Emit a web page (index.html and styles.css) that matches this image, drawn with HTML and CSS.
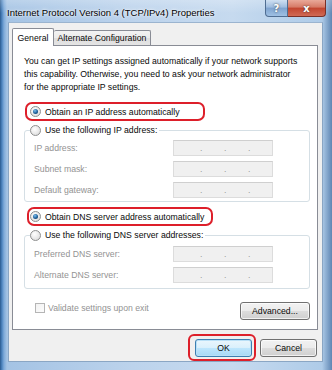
FILE: index.html
```html
<!DOCTYPE html>
<html>
<head>
<meta charset="utf-8">
<link rel="stylesheet" href="styles.css">
</head>
<body>
<div class="window">
  <div class="titlebar">
    <span class="title">Internet Protocol Version 4 (TCP/IPv4) Properties</span>
    <div class="caption-btns">
      <span class="cap help">?</span>
      <span class="cap close">x</span>
    </div>
  </div>
  <div class="client">
    <div class="tabs">
      <div class="tab active">General</div>
      <div class="tab">Alternate Configuration</div>
    </div>
    <div class="panel">
      <p class="intro">You can get IP settings assigned automatically if your network supports<br>this capability. Otherwise, you need to ask your network administrator<br>for the appropriate IP settings.</p>

      <div class="mark mark-ip">
        <span class="radio on"></span><span class="opt">Obtain an IP address automatically</span>
      </div>

      <fieldset class="group group-ip">
        <legend><span class="radio"></span><span class="opt">Use the following IP address:</span></legend>
        <div class="row"><span class="lbl">IP address:</span><span class="ip"><i>.</i><i>.</i><i>.</i></span></div>
        <div class="row"><span class="lbl">Subnet mask:</span><span class="ip"><i>.</i><i>.</i><i>.</i></span></div>
        <div class="row"><span class="lbl">Default gateway:</span><span class="ip"><i>.</i><i>.</i><i>.</i></span></div>
      </fieldset>

      <div class="mark mark-dns">
        <span class="radio on"></span><span class="opt">Obtain DNS server address automatically</span>
      </div>

      <fieldset class="group group-dns">
        <legend><span class="radio"></span><span class="opt">Use the following DNS server addresses:</span></legend>
        <div class="row"><span class="lbl">Preferred DNS server:</span><span class="ip"><i>.</i><i>.</i><i>.</i></span></div>
        <div class="row"><span class="lbl">Alternate DNS server:</span><span class="ip"><i>.</i><i>.</i><i>.</i></span></div>
      </fieldset>

      <div class="bottom-row">
        <label class="check"><span class="box"></span><span>Validate settings upon exit</span></label>
        <button class="btn adv">Advanced...</button>
      </div>
    </div>
    <div class="footer">
      <div class="mark-ok"><button class="btn default">OK</button></div>
      <button class="btn cancel">Cancel</button>
    </div>
  </div>
</div>
</body>
</html>
```

FILE: styles.css
```css
* { box-sizing: border-box; }
html, body { margin: 0; padding: 0; }
body {
  width: 332px;
  height: 370px;
  overflow: hidden;
  font-family: "Liberation Sans", Arial, sans-serif;
  font-size: 8.7px;
  color: #0a0a0a;
  background: #9fbfe0;
}
.window {
  width: 332px;
  height: 370px;
  display: flex;
  flex-direction: column;
  background:
    linear-gradient(to right, #2a5a8f 0, #4f86c0 2px, #7eaad9 4px, #a4c3e4 7px, #bcd3ec 40%, #c6daef 70%, #aecbe8 97%, #5f86b3 100%);
}
.titlebar {
  height: 23px;
  display: flex;
  justify-content: space-between;
  align-items: flex-start;
  background: linear-gradient(to bottom, rgba(255,255,255,0.25), rgba(255,255,255,0) 60%);
}
.title {
  font-size: 9.5px;
  padding: 7px 0 0 7px;
  color: #000;
  text-shadow: 0 0 4px rgba(255,255,255,0.9), 0 0 2px #fff;
}
.caption-btns {
  display: flex;
  margin-right: 6px;
}
.cap {
  height: 17px;
  display: flex;
  align-items: center;
  justify-content: center;
  color: #fff;
  font-family: "DejaVu Sans", sans-serif;
  font-weight: bold;
  font-size: 10px;
  text-shadow: 0 0 2px #333;
  border: 1px solid #4f6d92;
  border-top: none;
}
.help {
  width: 23px;
  border-radius: 0 0 0 4px;
  background: linear-gradient(to bottom, #cfe0f2, #9fbde0 45%, #7ea3cf 50%, #9fc0e3);
}
.close {
  width: 38px;
  border-left: none;
  border-color: #7a3027;
  border-radius: 0 0 4px 0;
  background: linear-gradient(to bottom, #e9a999, #d67a66 45%, #c2452f 50%, #d06a55);
}
.client {
  flex: 1;
  margin: 0 9px 8px 8px;
  background: #f0f0f0;
  border: 1px solid #8aa6c4;
  border-top-color: #9bb4cf;
  padding: 5px 4px 0 3px;
  display: flex;
  flex-direction: column;
}
.tabs {
  display: flex;
  align-items: flex-end;
  height: 17px;
}
.tab {
  position: relative;
  border: 1px solid #898c95;
  border-bottom: none;
  border-radius: 2px 2px 0 0;
  display: flex;
  align-items: center;
  justify-content: center;
}
.tab.active {
  z-index: 1;
  height: 18px;
  width: 42px;
  margin-bottom: -1px;
  background: #fff;
}
.tab:not(.active) {
  height: 15px;
  width: 97px;
  border-left: none;
  background: linear-gradient(to bottom, #f3f3f3, #ebebeb 50%, #dedede 50%, #e4e4e4);
}
.panel {
  height: 285px;
  background: #fff;
  border: 1px solid #898c95;
  padding: 9px 7px 0 11px;
  display: flex;
  flex-direction: column;
}
.intro {
  margin: 0;
  line-height: 13px;
}
.mark {
  display: flex;
  align-items: center;
  height: 19px;
  border: 2px solid #dd1f2a;
  border-radius: 7px;
  padding-left: 3px;
}
.mark-ip { width: 180px; margin: 8px 0 0 1px; }
.mark-dns { width: 186px; margin: 5px 0 0 3px; padding-left: 1px; }
.radio {
  width: 11px;
  height: 11px;
  flex: none;
  border-radius: 50%;
  border: 1px solid #8e8f8f;
  background: radial-gradient(circle at 40% 35%, #ffffff, #dedede 80%);
  display: inline-flex;
  align-items: center;
  justify-content: center;
  margin-right: 4px;
}
.radio.on::after {
  content: "";
  width: 5px;
  height: 5px;
  border-radius: 50%;
  background: radial-gradient(circle at 40% 35%, #7fc0ee, #1d5f9a 55%, #0c2e52);
}
.opt { white-space: nowrap; }
.group {
  margin: 3px 0 0 0;
  border: 1px solid #d5dfe5;
  border-radius: 3px;
  padding: 4px 0 3px 9px;
}
.group legend {
  display: flex;
  align-items: center;
  padding: 0 2px 0 0;
  margin-left: -4px;
  height: 12px;
}
.group-dns { padding-top: 5px; padding-bottom: 5px; }
.row {
  display: flex;
  align-items: center;
  height: 16px;
  margin-top: 5px;
}
.row:first-of-type { margin-top: 0; }
.lbl {
  width: 139px;
  color: #939393;
  white-space: nowrap;
}
.ip {
  width: 100px;
  height: 16px;
  border: 1px solid #dcdcdc;
  border-top-color: #cfcfcf;
  background: #f0f0f0;
  display: flex;
  padding-left: 26px;
  color: #9a9a9a;
  line-height: 14px;
}
.ip i {
  font-style: normal;
  width: 24px;
}
.bottom-row {
  display: flex;
  align-items: flex-start;
  justify-content: space-between;
  margin-top: 13px;
  padding-left: 11px;
}
.check {
  display: flex;
  align-items: center;
  color: #939393;
  height: 11px;
}
.box {
  width: 10px;
  height: 10px;
  border: 1px solid #b5b5b5;
  background: linear-gradient(135deg, #f2f2f2, #fcfcfc);
  margin-right: 3px;
}
.btn {
  font-family: "Liberation Sans", Arial, sans-serif;
  font-size: 8.7px;
  color: #0a0a0a;
  height: 18px;
  padding: 0;
  border: 1px solid #707070;
  border-radius: 3px;
  background: linear-gradient(to bottom, #f2f2f2, #ebebeb 50%, #dddddd 50%, #cfcfcf);
  box-shadow: inset 0 0 0 1px rgba(255,255,255,0.7);
}
.adv { width: 70px; height: 18px; }
.footer {
  display: flex;
  justify-content: flex-end;
  align-items: flex-start;
  margin-top: 4px;
  padding-right: 1px;
}
.mark-ok {
  width: 68px;
  height: 27px;
  border: 2px solid #dd1f2a;
  border-radius: 6px;
  padding: 3px 2px 0 5px;
  margin-right: 4px;
}
.btn.default {
  width: 57px;
  border-color: #3c7fb1;
  background: linear-gradient(to bottom, #eaf6fd, #d9f0fc 50%, #bee6fd 50%, #a7d9f5);
  box-shadow: inset 0 0 0 1px #b9e0f7;
}
.cancel { width: 57px; margin-top: 5px; }
```
